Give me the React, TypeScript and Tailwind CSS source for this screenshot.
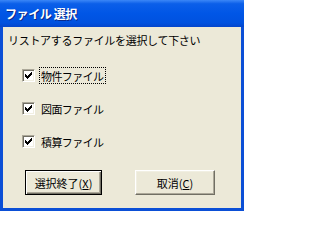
import type { ReactNode } from "react";

const jp = "font-['Noto_Sans_CJK_JP','Noto_Sans_CJK_SC',sans-serif]";

const items = ["物件ファイル", "図面ファイル", "積算ファイル"];

function CheckMark() {
  // classic 7x7 pixel check
  const px: [number, number][] = [
    [6, 0],
    [5, 1], [6, 1],
    [0, 2], [4, 2], [5, 2], [6, 2],
    [0, 3], [1, 3], [3, 3], [4, 3], [5, 3],
    [0, 4], [1, 4], [2, 4], [3, 4], [4, 4],
    [1, 5], [2, 5], [3, 5],
    [2, 6],
  ];
  return (
    <svg width="7" height="7" viewBox="0 0 7 7" shapeRendering="crispEdges">
      {px.map(([x, y]) => (
        <rect key={`${x}-${y}`} x={x} y={y} width="1" height="1" fill="#000" />
      ))}
    </svg>
  );
}

function Checkbox({ label, focused }: { label: string; focused?: boolean }) {
  return (
    <div className="flex h-[17px] items-center">
      <div className="flex h-[13px] w-[13px] items-center justify-center border border-t-[#aca899] border-l-[#aca899] border-b-white border-r-white bg-white shadow-[inset_1px_1px_0_#716f64,inset_-1px_-1px_0_#f1efe2]">
        <CheckMark />
      </div>
      <div
        className={`ml-[4px] flex h-[17px] w-[67px] items-center pl-[1px] ${
          focused ? "border border-dotted border-black" : "border border-transparent"
        }`}
      >
        <span className="text-[11px] leading-[14px] tracking-[-0.6px] text-black">{label}</span>
      </div>
    </div>
  );
}

function Button({ children, isDefault, width }: { children: ReactNode; isDefault?: boolean; width: string }) {
  return (
    <button
      type="button"
      className={`flex h-[25px] ${width} items-center justify-center bg-[#ece9d8] text-[11px] leading-[14px] text-black ${
        isDefault
          ? "border border-black shadow-[inset_1px_1px_0_#fff,inset_-1px_-1px_0_#716f64,inset_-2px_-2px_0_#aca899]"
          : "border border-t-white border-l-white border-b-[#716f64] border-r-[#716f64] shadow-[inset_-1px_-1px_0_#aca899,inset_1px_1px_0_#f1efe2]"
      }`}
    >
      {children}
    </button>
  );
}

export default function App() {
  return (
    <div className={`flex h-[211px] w-[244px] flex-col ${jp}`}>
      {/* Title bar */}
      <div className="flex h-[27px] items-center bg-[linear-gradient(180deg,#3b87f7_0%,#0b5fe9_14%,#0056e6_50%,#0051df_85%,#0445cb_100%)] pl-[5px]">
        <span className="text-[12px] font-bold leading-[14px] tracking-[-0.4px] text-white [text-shadow:1px_1px_0_#0a2a8a]">
          ファイル 選択
        </span>
      </div>

      {/* Body */}
      <div className="flex flex-1 flex-col border-x-[3px] border-b-[3px] border-[#0b4fd6] bg-[#ece9d8]">
        <p className="ml-[5px] mt-[6px] text-[11px] leading-[14px] tracking-[-0.3px] text-black">
          リストアするファイルを選択して下さい
        </p>

        <div className="ml-[19px] mt-[20px] flex flex-col gap-[16px]">
          {items.map((it, i) => (
            <Checkbox key={it} label={it} focused={i === 0} />
          ))}
        </div>

        <div className="ml-[22px] mt-[20px] flex gap-[33px]">
          <Button isDefault width="w-[77px]">
            選択終了(<span className="underline">X</span>)
          </Button>
          <Button width="w-[80px]">
            取消(<span className="underline">C</span>)
          </Button>
        </div>
      </div>
    </div>
  );
}
